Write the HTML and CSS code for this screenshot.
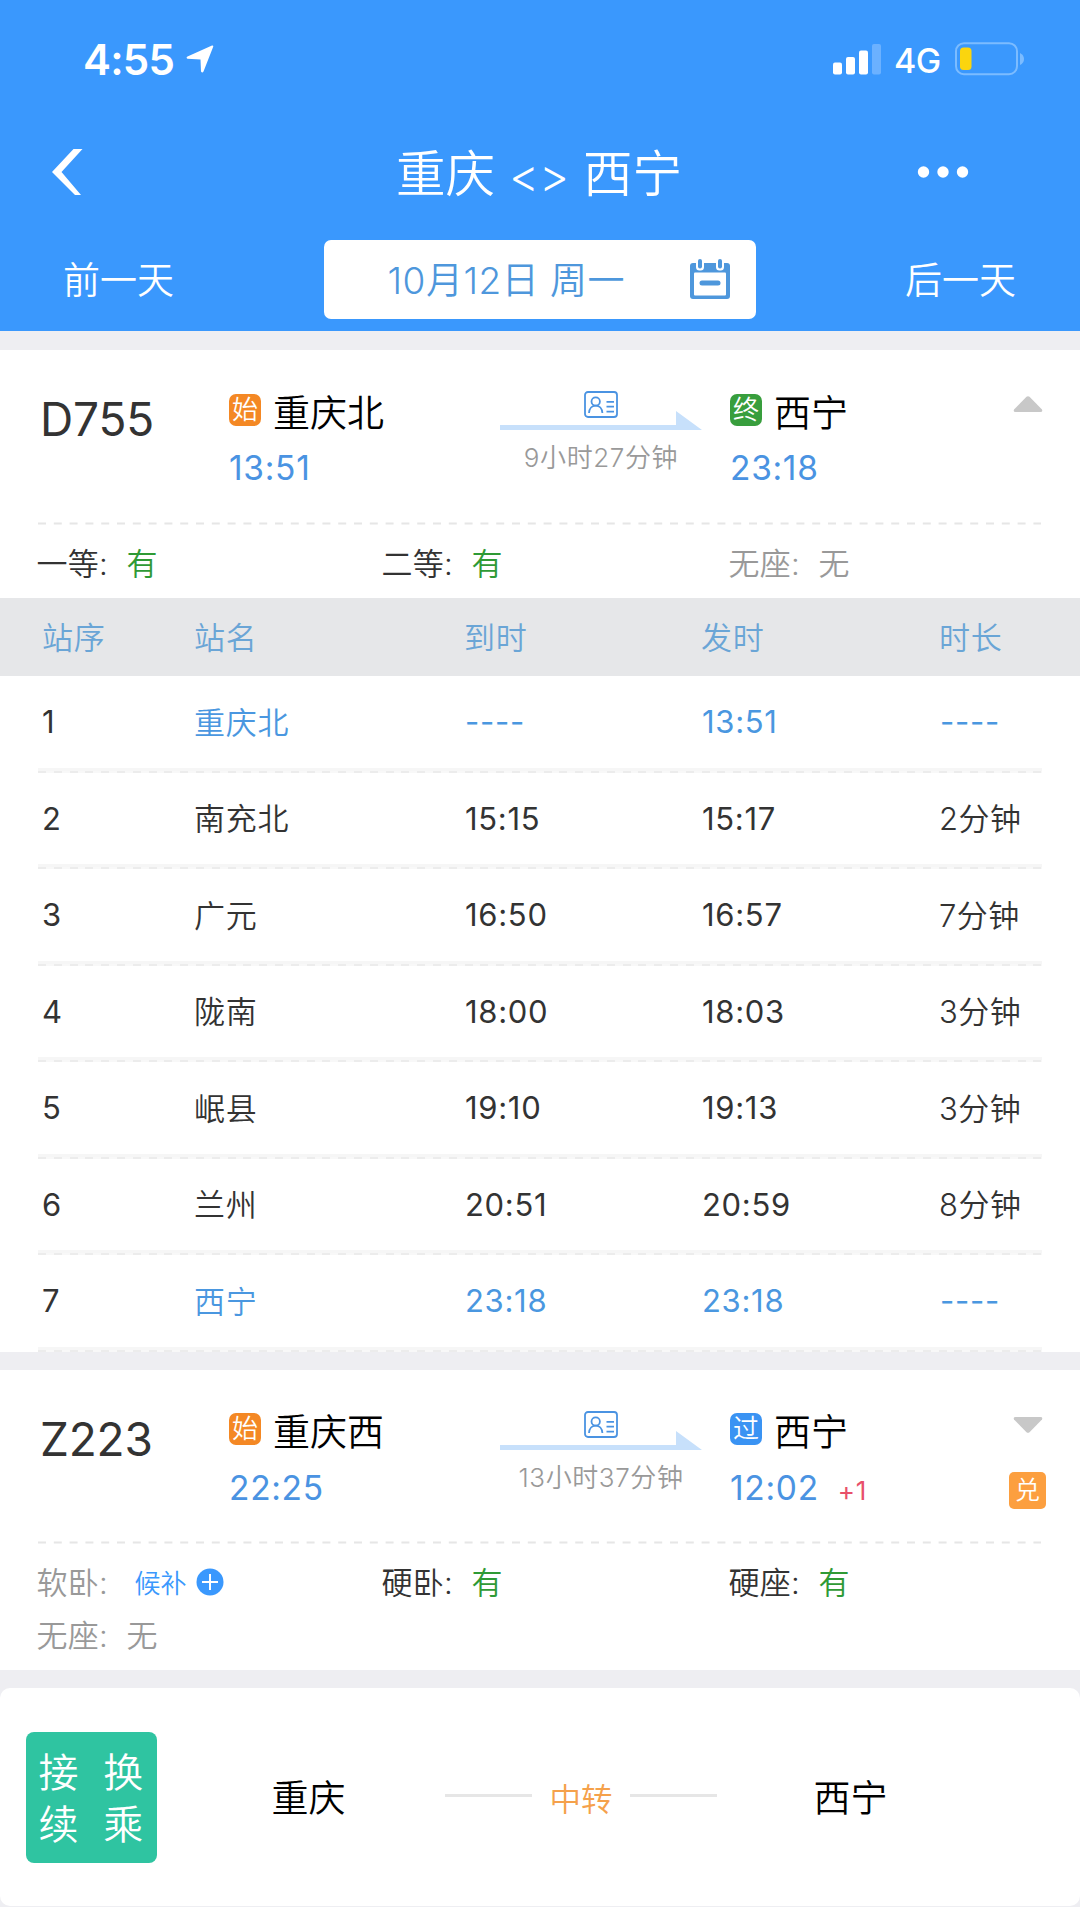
FILE: index.html
```html
<!DOCTYPE html>
<html lang="zh-CN">
  <head>
    <meta charset="UTF-8" />
    <meta name="viewport" content="width=device-width, initial-scale=1.0" />
    <title>重庆 - 西宁</title>
    <link rel="stylesheet" href="styles.css">
  </head>
  <body>
    <!-- Shared icons -->
    <svg class="sprite" width="0" height="0">
      <symbol id="icon-id" viewBox="0 0 34 27">
        <rect x="1" y="1" width="32" height="25" rx="3" fill="none" stroke="currentColor" stroke-width="1.8" />
        <circle cx="11.7" cy="10.5" r="4.2" fill="none" stroke="currentColor" stroke-width="1.8" />
        <path d="M5 22c.3-4.5 3-7.300 6.700-7.300s6.400 2.800 6.700 7.300M22.500 10.800h7.500M22.500 15.600h7.500M22.500 20.600h7.500" fill="none" stroke="currentColor" stroke-width="1.8" />
      </symbol>
      <symbol id="icon-line" viewBox="0 0 202 20">
        <path d="M0 14h176V0l26 19H0z" fill="#c7e0fb" />
      </symbol>
      <symbol id="icon-caret" viewBox="0 0 30 17">
        <path d="M13.500.8q1.500-1.200 3 0L29 13.500q1 2.500-1.500 2.500H2.500Q0 16 1 13.500z" fill="#c8c8c8" />
      </symbol>
    </svg>

    <header class="header">
      <div class="status-bar">
        <span class="clock">4:55</span>
        <svg class="location" width="28" height="28" viewBox="0 0 28 28">
          <path d="M26 .5q1.600-.3 1.200 1.300L17.500 26.500q-1.200 1.800-2.500 0l-.5-12L1.500 13.700q-1.800-1 0-2.200z" fill="#fff" />
        </svg>
        <svg class="signal" width="48" height="31" viewBox="0 0 48 31">
          <rect x="0" y="18.500" width="9" height="12" rx="2" fill="#fff" />
          <rect x="13" y="13" width="9" height="17.500" rx="2" fill="#fff" />
          <rect x="26" y="6.500" width="9" height="24" rx="2" fill="#fff" />
          <rect x="39" y="0" width="9" height="30.500" rx="2" fill="#6bb1ff" />
        </svg>
        <span class="network">4G</span>
        <svg class="battery" width="70" height="34" viewBox="0 0 70 34">
          <rect x="1" y="1.200" width="61" height="31" rx="8" fill="none" stroke="#7cbcff" stroke-width="2" />
          <path d="M65 11q4 2 4 6t-4 6z" fill="#7cbcff" />
          <rect x="5" y="5.500" width="11.500" height="22.500" rx="3.500" fill="#fbd50e" />
        </svg>
      </div>

      <div class="nav">
        <svg class="back" width="34" height="46" viewBox="0 0 34 46">
          <path d="M31.500 0 10.500 23 30 46h-6L1 23 22.500 0z" fill="#fff" />
        </svg>
        <h1 class="title">重庆 <span class="swap">&lt;&gt;</span> 西宁</h1>
        <svg class="more" width="52" height="14" viewBox="0 0 52 14">
          <circle cx="6.500" cy="7" r="5.700" fill="#fff" />
          <circle cx="26" cy="7" r="5.700" fill="#fff" />
          <circle cx="45.500" cy="7" r="5.700" fill="#fff" />
        </svg>
      </div>

      <div class="days">
        <span class="day">前一天</span>
        <div class="date-box">
          <span class="date">10月12日 周一</span>
          <svg width="40" height="40" viewBox="0 0 40 40">
            <path d="M3 4h34q3 0 3 3v30q0 3-3 3H3q-3 0-3-3V7q0-3 3-3z" fill="#4e97dc" />
            <rect x="4" y="13.500" width="32" height="23" rx="1" fill="#fff" />
            <rect x="6" y="0" width="8" height="11.500" rx="3.500" fill="#fff" />
            <rect x="26" y="0" width="8" height="11.500" rx="3.500" fill="#fff" />
            <rect x="8" y="0" width="4" height="9.500" rx="2" fill="#4e97dc" />
            <rect x="28" y="0" width="4" height="9.500" rx="2" fill="#4e97dc" />
            <rect x="9.500" y="21.500" width="21" height="5" rx="2.500" fill="#4e97dc" />
          </svg>
        </div>
        <span class="day">后一天</span>
      </div>
    </header>

    <section class="card">
      <div class="train">
        <div class="train-no">D755</div>
        <div class="stop">
          <div class="station"><span class="tag start">始</span>重庆北</div>
          <div class="time">13:51</div>
        </div>
        <div class="trip">
          <svg class="id-card" width="34" height="27"><use href="#icon-id" /></svg>
          <svg class="line" width="202" height="20"><use href="#icon-line" /></svg>
          <div class="duration">9小时27分钟</div>
        </div>
        <div class="stop">
          <div class="station"><span class="tag end">终</span>西宁</div>
          <div class="time">23:18</div>
        </div>
        <div class="side">
          <svg width="30" height="17"><use href="#icon-caret" /></svg>
        </div>
      </div>
      <svg class="dash" width="1003" height="3"><line x1="0" y1="1.500" x2="1003" y2="1.500" /></svg>
      <div class="seats">
        <div class="seat"><span class="label">一等:</span><span class="yes">有</span></div>
        <div class="seat"><span class="label">二等:</span><span class="yes">有</span></div>
        <div class="seat none"><span class="label">无座:</span><span>无</span></div>
      </div>

      <div class="stops">
        <div class="row head"><span>站序</span><span>站名</span><span>到时</span><span>发时</span><span>时长</span></div>
        <div class="row ends"><span class="no">1</span><span class="name">重庆北</span><span>----</span><span>13:51</span><span>----</span></div>
        <div class="row"><span class="no">2</span><span class="name">南充北</span><span>15:15</span><span>15:17</span><span class="stay">2分钟</span></div>
        <div class="row"><span class="no">3</span><span class="name">广元</span><span>16:50</span><span>16:57</span><span class="stay">7分钟</span></div>
        <div class="row"><span class="no">4</span><span class="name">陇南</span><span>18:00</span><span>18:03</span><span class="stay">3分钟</span></div>
        <div class="row"><span class="no">5</span><span class="name">岷县</span><span>19:10</span><span>19:13</span><span class="stay">3分钟</span></div>
        <div class="row"><span class="no">6</span><span class="name">兰州</span><span>20:51</span><span>20:59</span><span class="stay">8分钟</span></div>
        <div class="row ends"><span class="no">7</span><span class="name">西宁</span><span>23:18</span><span>23:18</span><span>----</span></div>
      </div>
    </section>

    <section class="card">
      <div class="train">
        <div class="train-no">Z223</div>
        <div class="stop">
          <div class="station"><span class="tag start">始</span>重庆西</div>
          <div class="time">22:25</div>
        </div>
        <div class="trip">
          <svg class="id-card" width="34" height="27"><use href="#icon-id" /></svg>
          <svg class="line" width="202" height="20"><use href="#icon-line" /></svg>
          <div class="duration">13小时37分钟</div>
        </div>
        <div class="stop">
          <div class="station"><span class="tag pass">过</span>西宁</div>
          <div class="time">12:02<span class="plus-day">+1</span></div>
        </div>
        <div class="side">
          <svg class="down" width="30" height="17"><use href="#icon-caret" /></svg>
          <span class="exchange">兑</span>
        </div>
      </div>
      <svg class="dash" width="1003" height="3"><line x1="0" y1="1.500" x2="1003" y2="1.500" /></svg>
      <div class="seats">
        <div class="seat none">
          <span class="label">软卧:</span><span class="wait">候补</span>
          <svg class="add" width="28" height="28" viewBox="0 0 28 28">
            <circle cx="14" cy="14" r="13.500" fill="#3a98fd" />
            <path d="M14 6v16M6 14h16" stroke="#fff" stroke-width="2" />
          </svg>
        </div>
        <div class="seat"><span class="label">硬卧:</span><span class="yes">有</span></div>
        <div class="seat"><span class="label">硬座:</span><span class="yes">有</span></div>
        <div class="seat none"><span class="label">无座:</span><span>无</span></div>
      </div>
    </section>

    <section class="card transfer">
      <div class="transfer-tag"><span>接</span><span>换</span><span>续</span><span>乘</span></div>
      <span class="city">重庆</span>
      <div class="via"><i></i><span>中转</span><i></i></div>
      <span class="city">西宁</span>
    </section>
  </body>
</html>
```
FILE: styles.css
```css
* {
  box-sizing: border-box;
}
body {
  margin: 0;
  width: 1080px;
  height: 1907px;
  overflow: hidden;
  background-color: #eeeef2;
  color: #333;
  font-family: Inter, "Noto Sans CJK SC", sans-serif;
  font-weight: 350;
}
svg {
  display: block;
  flex: none;
}
.sprite {
  position: absolute;
}

/* Header */
.header {
  height: 331px;
  background-color: #3a98fd;
  color: #fff;
}
.status-bar {
  height: 118px;
  padding: 0 56px 0 83px;
  display: flex;
  align-items: center;
}
.clock {
  font-size: 42px;
  font-weight: 600;
  letter-spacing: -0.8px;
}
.location {
  margin-left: 12px;
}
.signal {
  margin-left: auto;
}
.network {
  margin: 3px 0 0 13px;
  width: 61px;
  font-size: 34px;
  font-weight: 500;
  letter-spacing: -0.5px;
}
.battery {
  margin-right: -1px;
}
.nav {
  height: 108px;
  padding: 0 111px 0 51px;
  display: flex;
  align-items: center;
  justify-content: space-between;
}
.title {
  margin: 4px 0 0 76px;
  font-size: 49.5px;
  font-weight: 350;
  line-height: 104px;
}
.swap {
  font-size: 46px;
}
.days {
  margin-top: 14px;
  padding: 0 64px 0 63px;
  height: 78.5px;
  display: flex;
  align-items: center;
  justify-content: space-between;
  font-size: 37px;
}
.day {
  margin-top: -2px;
}
.date-box {
  width: 432px;
  height: 78.5px;
  padding: 0 26px 0 64px;
  border-radius: 7px;
  background-color: #fff;
  color: #4e97dc;
  display: flex;
  align-items: center;
  justify-content: space-between;
}
.date {
  margin-top: -3px;
  letter-spacing: 0.5px;
}

/* Train cards */
.card {
  margin-top: 19px;
  background-color: #fff;
}
.card + .card {
  margin-top: 18px;
}
.train {
  height: 171.5px;
  padding: 33px 34px 0 38px;
  display: grid;
  grid-template-columns: 191px 271px 230px 1fr 37px;
}
.train-no {
  padding-left: 2px;
  font-size: 46px;
  font-weight: 400;
  line-height: 73px;
  letter-spacing: -0.2px;
}
.station {
  height: 56px;
  padding-bottom: 1px;
  display: flex;
  align-items: center;
  color: #000;
  font-size: 37px;
}
.tag {
  width: 32px;
  height: 32px;
  margin: -2px 12px 0 0;
  border-radius: 7px;
  color: #fff;
  font-size: 26px;
  line-height: 31px;
  text-align: center;
}
.start {
  background-color: #f48824;
}
.end {
  background-color: #389e3d;
}
.pass {
  background-color: #3a93f3;
}
.time {
  color: #4a93e2;
  font-size: 33.5px;
  font-weight: 400;
  line-height: 58px;
  letter-spacing: 0.7px;
}
.plus-day {
  margin-left: 19px;
  color: #e8506a;
  font-size: 26px;
}
.trip {
  width: 202px;
  padding-top: 8px;
}
.id-card {
  margin: 0 auto;
  color: #4a93e2;
}
.line {
  margin-top: -7px;
}
.duration {
  margin-top: 8px;
  color: #999;
  font-size: 26px;
  line-height: 38px;
  letter-spacing: 0.6px;
  text-align: center;
  white-space: nowrap;
}
.side {
  padding-top: 13px;
  display: flex;
  flex-direction: column;
  align-items: center;
}
.down {
  transform: rotate(180deg);
}
.exchange {
  width: 37px;
  height: 37px;
  margin-top: 39px;
  border-radius: 5px;
  background-color: #fc9f3f;
  color: #fff;
  font-size: 25px;
  line-height: 36px;
  text-align: center;
}
.dash {
  margin-left: 38px;
  stroke: #e6e6e6;
  stroke-width: 2;
  stroke-dasharray: 8 7.8;
}

/* Seats */
.seats {
  padding: 10.5px 38px 10px 36.5px;
  display: grid;
  grid-template-columns: 345px 347px 1fr;
  font-size: 31px;
}
.seat {
  height: 52.5px;
  display: flex;
  align-items: center;
}
.label {
  width: 90px;
  letter-spacing: 0.3px;
}
.none {
  color: #999;
}
.yes {
  color: #2f9a35;
}
.wait {
  margin: 2px 9px 0 8px;
  color: #3a98fd;
  font-size: 26px;
}
.add {
  margin-top: 3px;
}

/* Stop list */
.row {
  height: 96.5px;
  margin: 0 38px;
  padding: 0 0 5px 5px;
  display: grid;
  grid-template-columns: 152px 270px 237px 238px 1fr;
  align-items: center;
  background:
    repeating-linear-gradient(90deg, #ececec 0 8px, #f8f8f8 8px 15.8px) bottom / 100% 2px no-repeat,
    linear-gradient(#f6f6f6, #f6f6f6) bottom / 100% 5px no-repeat;
  font-size: 31px;
  font-weight: 400;
  letter-spacing: 0.7px;
  white-space: nowrap;
}
.head {
  height: 78.5px;
  margin: 0;
  padding: 0 0 2px 42px;
  background: #e6e7e9;
  color: #6aa5d6;
  font-weight: 350;
}
.no {
  margin-left: -1px;
}
.name {
  margin: -3px 0 0 -1px;
  font-weight: 350;
}
.stay {
  margin: -3px 0 0 -1px;
  font-weight: 350;
  letter-spacing: 0.5px;
}
.ends {
  color: #4a97e0;
}
.ends .no {
  color: #333;
}

/* Transfer */
.transfer {
  height: 218px;
  padding: 0 0 0 26px;
  border-radius: 10px;
  display: flex;
  align-items: center;
}
.transfer-tag {
  width: 130.5px;
  height: 131px;
  margin-top: 2px;
  padding: 15px 1px 0 0;
  border-radius: 8px;
  background-color: #2fc4a1;
  color: #fff;
  display: grid;
  grid-template-columns: 1fr 1fr;
  grid-auto-rows: 52px;
  font-size: 40px;
  line-height: 52px;
  text-align: center;
}
.city {
  width: 172px;
  margin: -1px 0 0 115px;
  color: #000;
  font-size: 37px;
}
.via {
  width: 273px;
  margin-left: 1px;
  display: flex;
  align-items: center;
  justify-content: space-between;
  color: #f5a14b;
  font-size: 31.5px;
}
.via i {
  width: 87px;
  height: 3px;
  margin-top: -3px;
  background-color: #e6e6e6;
}
.via + .city {
  margin-left: 96px;
}
```
